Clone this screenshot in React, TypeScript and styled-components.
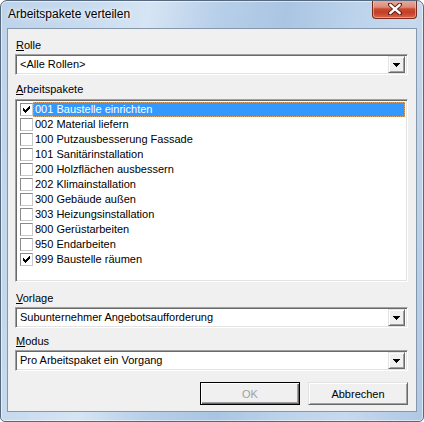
import React from "react";
import styled, { createGlobalStyle, css } from "styled-components";

const Global = createGlobalStyle`
  html, body { margin: 0; padding: 0; background: #ffffff; }
  body { font-family: "Liberation Sans", Arial, sans-serif; }
  * { box-sizing: border-box; }
`;

const sunken = css`
  border: 1px solid;
  border-color: #a0a0a0 #ffffff #ffffff #a0a0a0;
  box-shadow: inset 1px 1px 0 #696969, inset -1px -1px 0 #e3e3e3;
`;

const raised = css`
  border: 1px solid;
  border-color: #e3e3e3 #696969 #696969 #e3e3e3;
  box-shadow: inset 1px 1px 0 #ffffff, inset -1px -1px 0 #a0a0a0;
`;

const Window = styled.div`
  width: 424px;
  height: 422px;
  display: flex;
  flex-direction: column;
  border: 1px solid #56687d;
  border-radius: 7px 7px 5px 5px;
  padding-bottom: 9px;
  overflow: hidden;
  background: linear-gradient(
    100deg,
    #bdd3ea 0%,
    #c8dbef 18%,
    #d6e5f4 30%,
    #b7cfe9 44%,
    #aac5e3 58%,
    #bcd3eb 72%,
    #c6d9ee 84%,
    #aec8e5 100%
  );
  box-shadow: inset 0 0 0 1px rgba(255, 255, 255, 0.55);
`;

const TitleBar = styled.div`
  height: 27px;
  flex: none;
  display: flex;
  justify-content: space-between;
  align-items: flex-start;
  padding: 0 6px 0 7px;
`;

const TitleText = styled.div`
  font-family: "Liberation Sans", Arial, sans-serif;
  font-size: 12px;
  line-height: 14px;
  color: #000000;
  margin-top: 6px;
  text-shadow: 0 0 6px rgba(255, 255, 255, 0.9), 0 0 3px rgba(255, 255, 255, 0.9);
`;

const CloseButton = styled.div`
  width: 45px;
  height: 19px;
  margin-top: -1px;
  display: flex;
  align-items: center;
  justify-content: center;
  border: 1px solid #7a2a1c;
  border-top: none;
  border-radius: 0 0 4px 4px;
  background: linear-gradient(
    180deg,
    #eab0a2 0%,
    #dd8a76 40%,
    #c74a32 50%,
    #c43f26 70%,
    #d8664a 100%
  );
  box-shadow: inset 0 0 0 1px rgba(255, 210, 200, 0.5);
`;

const Client = styled.div`
  flex: 1;
  margin: 0 6px;
  border: 1px solid #8797aa;
  background: #f0f0f0;
  display: flex;
  flex-direction: column;
  padding: 10px 8px 0 7px;
  font-family: "Liberation Sans", Arial, sans-serif;
  font-size: 11px;
  color: #000000;
`;

const Label = styled.div<{ $top: number }>`
  height: 13px;
  line-height: 13px;
  margin-top: ${(p) => p.$top}px;
  margin-bottom: 2px;
  padding-left: 1px;
  u { text-decoration: underline; text-underline-offset: 1px; }
`;

const Combo = styled.div`
  height: 21px;
  ${sunken};
  background: #ffffff;
  display: flex;
  align-items: center;
  padding: 2px 2px 2px 4px;
`;

const ComboText = styled.div`
  flex: 1;
  line-height: 13px;
  white-space: nowrap;
  overflow: hidden;
`;

const DropButton = styled.div`
  width: 17px;
  height: 17px;
  background: #f0f0f0;
  ${raised};
  display: flex;
  align-items: center;
  justify-content: center;
`;

const ListBox = styled.div`
  height: 183px;
  margin-top: 1px;
  ${sunken};
  background: #ffffff;
  padding: 2px;
  display: flex;
  flex-direction: column;
`;

const Row = styled.div`
  height: 15px;
  display: flex;
  align-items: center;
`;

const CheckBox = styled.span`
  width: 13px;
  height: 13px;
  margin-left: 2px;
  flex: none;
  background: #ffffff;
  border: 1px solid;
  border-color: #8a8a8a #c8c8c8 #c8c8c8 #8a8a8a;
  display: flex;
`;

const RowText = styled.span<{ $selected: boolean }>`
  flex: 1;
  height: 15px;
  line-height: 13px;
  padding-left: 1px;
  white-space: nowrap;
  border: 1px solid transparent;
  ${(p) =>
    p.$selected &&
    css`
      background: #3399ff;
      color: #ffffff;
      border: 1px dotted #d9a36a;
    `}
`;

const ButtonRow = styled.div`
  margin-top: 11px;
  display: flex;
  justify-content: flex-end;
  gap: 8px;
`;

const Button = styled.div<{ $default?: boolean; $disabled?: boolean }>`
  width: 100px;
  height: 23px;
  display: flex;
  align-items: center;
  justify-content: center;
  background: #f0f0f0;
  color: ${(p) => (p.$disabled ? "#a0a0a0" : "#000000")};
  ${(p) =>
    p.$default
      ? css`
          border: 1px solid #000000;
          box-shadow: inset 1px 1px 0 #ffffff, inset -1px -1px 0 #696969,
            inset -2px -2px 0 #a0a0a0;
        `
      : raised};
`;

const items: { code: string; name: string; checked: boolean }[] = [
  { code: "001", name: "Baustelle einrichten", checked: true },
  { code: "002", name: "Material liefern", checked: false },
  { code: "100", name: "Putzausbesserung Fassade", checked: false },
  { code: "101", name: "Sanitärinstallation", checked: false },
  { code: "200", name: "Holzflächen ausbessern", checked: false },
  { code: "202", name: "Klimainstallation", checked: false },
  { code: "300", name: "Gebäude außen", checked: false },
  { code: "303", name: "Heizungsinstallation", checked: false },
  { code: "800", name: "Gerüstarbeiten", checked: false },
  { code: "950", name: "Endarbeiten", checked: false },
  { code: "999", name: "Baustelle räumen", checked: true },
];

const Arrow = () => (
  <svg width="7" height="4" viewBox="0 0 7 4" style={{ display: "block" }}>
    <path d="M0 0h7v1h-1v1h-1v1h-1v1h-1v-1h-1v-1h-1v-1h-1z" fill="#000" />
  </svg>
);

const Check = () => (
  <svg width="11" height="11" viewBox="0 0 11 11" style={{ display: "block" }}>
    <path
      d="M2 4h1v3h-1z M3 5h1v3h-1z M4 6h1v3h-1z M5 5h1v3h-1z M6 4h1v3h-1z M7 3h1v3h-1z M8 2h1v3h-1z"
      fill="#000"
    />
  </svg>
);

const CloseGlyph = () => (
  <svg width="14" height="12" viewBox="0 0 14 12" style={{ display: "block" }}>
    <path
      d="M2 1.5 L12 10.5 M12 1.5 L2 10.5"
      stroke="#5a1f16"
      strokeWidth="4.2"
      strokeLinecap="round"
      fill="none"
    />
    <path
      d="M2.3 1.8 L11.7 10.2 M11.7 1.8 L2.3 10.2"
      stroke="#ffffff"
      strokeWidth="2.4"
      strokeLinecap="round"
      fill="none"
    />
  </svg>
);

const ComboField = ({ text }: { text: string }) => (
  <Combo>
    <ComboText>{text}</ComboText>
    <DropButton>
      <Arrow />
    </DropButton>
  </Combo>
);

export default function App() {
  return (
    <>
      <Global />
      <Window>
        <TitleBar>
          <TitleText>Arbeitspakete verteilen</TitleText>
          <CloseButton>
            <CloseGlyph />
          </CloseButton>
        </TitleBar>
        <Client>
          <Label $top={0}>
            <u>R</u>olle
          </Label>
          <ComboField text="<Alle Rollen>" />
          <Label $top={8}>
            <u>A</u>rbeitspakete
          </Label>
          <ListBox>
            {items.map((it, i) => (
              <Row key={it.code}>
                <CheckBox>{it.checked && <Check />}</CheckBox>
                <RowText $selected={i === 0}>
                  {it.code} {it.name}
                </RowText>
              </Row>
            ))}
          </ListBox>
          <Label $top={10}>
            <u>V</u>orlage
          </Label>
          <ComboField text="Subunternehmer Angebotsaufforderung" />
          <Label $top={7}>
            <u>M</u>odus
          </Label>
          <ComboField text="Pro Arbeitspaket ein Vorgang" />
          <ButtonRow>
            <Button $default $disabled>
              OK
            </Button>
            <Button>Abbrechen</Button>
          </ButtonRow>
        </Client>
      </Window>
    </>
  );
}
